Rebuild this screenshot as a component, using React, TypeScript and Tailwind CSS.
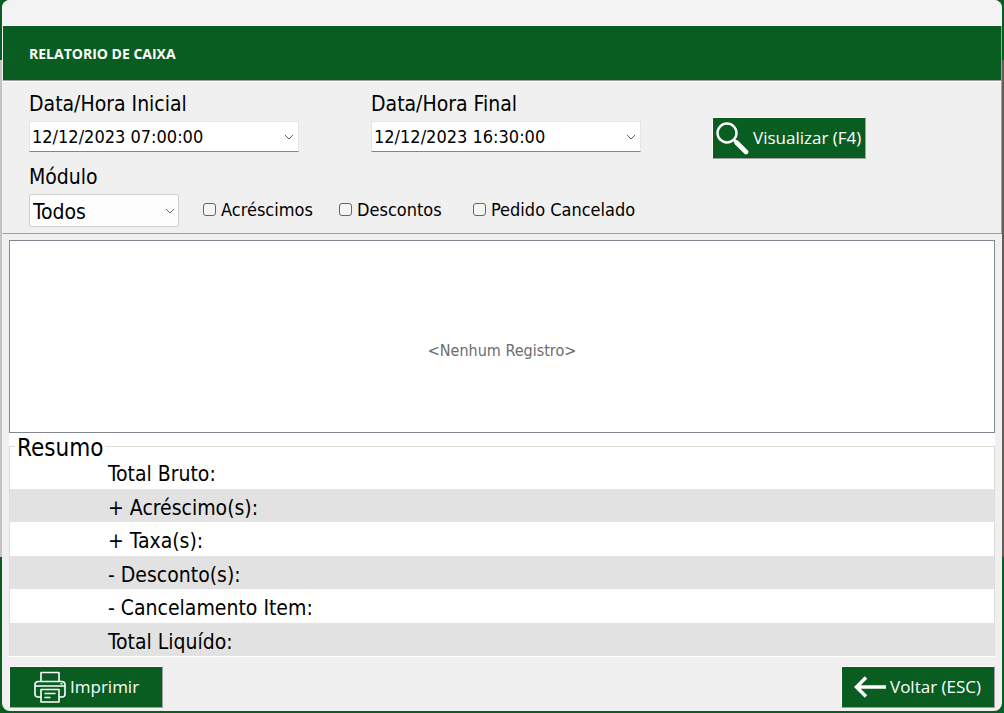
// App.tsx
import { useState } from 'react';

type CheckProps = {
  id: string;
  label: string;
  checked: boolean;
  onChange: (checked: boolean) => void;
};

type DateFieldProps = {
  id: string;
  label: string;
  value: string;
  onChange: (value: string) => void;
};

const summaryRows = [
  'Total Bruto:',
  '+ Acréscimo(s):',
  '+ Taxa(s):',
  '- Desconto(s):',
  '- Cancelamento Item:',
  'Total Liquído:',
];

const buttonClass =
  "flex h-[42px] w-[154px] items-center border border-t-white border-l-white border-r-[#a0a0a0] border-b-[#a0a0a0] bg-[#095d20] font-['Open_Sans',sans-serif] text-[17px] whitespace-nowrap text-white";

function Chevron() {
  return (
    <svg className="h-2 w-[10px]" viewBox="0 0 10 8" fill="none" stroke="#666" strokeWidth="1">
      <path d="M1 2l4 4 4-4" />
    </svg>
  );
}

function DateField({ id, label, value, onChange }: DateFieldProps) {
  return (
    <div className="w-[270px]">
      <label htmlFor={id} className="block h-7 text-[21px] leading-7">
        {label}
      </label>
      <div className="mt-[3px] flex h-[31px] items-center border border-[#e5e5e5] border-b-[#868686] bg-white pr-1">
        <input
          id={id}
          type="text"
          value={value}
          onChange={(e) => onChange(e.target.value)}
          className="min-w-0 flex-1 bg-transparent pl-[2px] text-[18px] leading-7 outline-none"
        />
        <button type="button" aria-label={label} className="flex">
          <Chevron />
        </button>
      </div>
    </div>
  );
}

function Check({ id, label, checked, onChange }: CheckProps) {
  return (
    <div className="flex items-center gap-[5px]">
      <input
        id={id}
        type="checkbox"
        checked={checked}
        onChange={(e) => onChange(e.target.checked)}
        className="size-[13px] appearance-none rounded-[3px] border border-[#666] bg-[#f5f5f5] checked:bg-[#095d20]"
      />
      <label htmlFor={id} className="text-[18px] leading-7 whitespace-nowrap">
        {label}
      </label>
    </div>
  );
}

export default function App() {
  const [start, setStart] = useState('12/12/2023 07:00:00');
  const [end, setEnd] = useState('12/12/2023 16:30:00');
  const [module, setModule] = useState('Todos');
  const [surcharges, setSurcharges] = useState(false);
  const [discounts, setDiscounts] = useState(false);
  const [cancelled, setCancelled] = useState(false);

  return (
    <div className="flex min-h-screen bg-[#095d20] font-['DejaVu_Sans_Condensed','DejaVu_Sans',sans-serif] text-black">
      <div className="flex w-[2px] flex-col">
        <div className="mt-[60px] mb-[156px] flex-1 bg-[#c4c4c4]" />
      </div>

      <div className="mb-[2px] flex min-w-0 flex-1 flex-col overflow-hidden rounded-lg bg-[#f0f0f0]">
        <div className="h-[26px] border-b border-white bg-[#f3f3f3]" />

        <div className="border-r border-b border-l border-[#a0a0a0] border-l-[#f0f0f0]">
          <header className="flex h-[54px] items-center bg-[#095d20] pl-[26px]">
            <h1 className="font-['Open_Sans',sans-serif] text-[14px] font-bold text-white">RELATORIO DE CAIXA</h1>
          </header>

          <form
            className="border-t border-[#a0a0a0] shadow-[inset_0_1px_0_#fff] pt-[9px] pb-[6px] pl-[26px]"
            onSubmit={(e) => e.preventDefault()}
          >
            <div className="flex items-end">
              <div className="w-[342px]">
                <DateField id="start" label="Data/Hora Inicial" value={start} onChange={setStart} />
              </div>
              <div className="w-[341px]">
                <DateField id="end" label="Data/Hora Final" value={end} onChange={setEnd} />
              </div>
              <div className="h-[35px]">
                <button type="submit" className={`${buttonClass} gap-1 pl-[2px]`}>
                  <svg className="size-[34px] shrink-0" viewBox="0 0 34 34" fill="none" stroke="#fff">
                    <circle cx="12" cy="12" r="9.5" strokeWidth="2.4" />
                    <path d="M18.5 18.5l3 3" strokeWidth="2.5" />
                    <path d="M21.5 21.5l9.5 9.5" strokeWidth="4.6" strokeLinecap="round" />
                  </svg>
                  Visualizar (F4)
                </button>
              </div>
            </div>

            <label htmlFor="module" className="mt-[11px] block h-7 text-[21px] leading-7">
              Módulo
            </label>
            <div className="mt-[3px] flex items-center">
              <div className="relative w-[150px]">
                <select
                  id="module"
                  value={module}
                  onChange={(e) => setModule(e.target.value)}
                  className="block h-[33px] w-full appearance-none rounded-[2px] border border-[#d0d0d0] bg-[#fdfdfd] pt-[2px] pl-[3px] text-[21px]"
                >
                  <option>Todos</option>
                </select>
                <span className="pointer-events-none absolute inset-y-0 right-1 flex items-center">
                  <Chevron />
                </span>
              </div>
              <div className="flex pb-[2px] pl-6">
                <div className="w-[136px]">
                  <Check id="surcharges" label="Acréscimos" checked={surcharges} onChange={setSurcharges} />
                </div>
                <div className="w-[134px]">
                  <Check id="discounts" label="Descontos" checked={discounts} onChange={setDiscounts} />
                </div>
                <Check id="cancelled" label="Pedido Cancelado" checked={cancelled} onChange={setCancelled} />
              </div>
            </div>
          </form>
        </div>

        <main className="flex flex-1 flex-col px-[7px] pt-[6px]">
          <section className="flex min-h-[193px] flex-1 items-center justify-center border border-[#828790] bg-white pt-7 text-[16px] text-[#6d6d6d]">
            &lt;Nenhum Registro&gt;
          </section>

          <section className="border-b border-white bg-white">
            <div className="flex h-[22px] items-center">
              <div className="h-[9px] w-[6px] self-end border-t border-l border-[#dcdcdc]" />
              <h2 className="px-[2px] pt-2 text-[24px] leading-6">Resumo</h2>
              <div className="h-[9px] flex-1 self-end border-t border-r border-[#dcdcdc]" />
            </div>
            <ul className="border-x border-[#dcdcdc]">
              {summaryRows.map((row, i) => (
                <li
                  key={row}
                  className={`flex items-center pt-1 pl-[98px] text-[21px] leading-7 ${
                    i % 2 ? 'h-[33px] bg-[#e2e2e2]' : 'h-[34px]'
                  }`}
                >
                  {row}
                </li>
              ))}
            </ul>
          </section>

          <footer className="flex justify-between pt-[9px] pb-[3px]">
            <button type="button" className={`${buttonClass} gap-1 pl-6`}>
              <svg
                className="size-8 shrink-0"
                viewBox="0 0 32 32"
                fill="none"
                stroke="#fff"
                strokeWidth="1.6"
                strokeLinejoin="round"
              >
                <path d="M7 10.5V1.5h18v9" />
                <path d="M7 26H4a3 3 0 0 1-3-3v-9.500a3 3 0 0 1 3-3h24a3 3 0 0 1 3 3V23a3 3 0 0 1-3 3h-3" />
                <path d="M1 15h30M7 18.500h18V31H7z" />
                <path d="M10.500 22.500h11M10.500 26.500h6" />
                <path d="M26.500 12.800h2" />
              </svg>
              Imprimir
            </button>
            <button type="button" className={`${buttonClass} gap-1 pl-3`}>
              <svg className="h-6 w-8 shrink-0" viewBox="0 0 32 24" fill="none" stroke="#fff" strokeWidth="3.5">
                <path d="M32 12H3M12 2.500L2.500 12l9.500 9.500" />
              </svg>
              Voltar (ESC)
            </button>
          </footer>
        </main>
      </div>

      <div className="flex w-[2px] flex-col">
        <div className="mt-[60px] mb-[156px] flex-1 bg-[#655b5b]" />
      </div>
    </div>
  );
}
